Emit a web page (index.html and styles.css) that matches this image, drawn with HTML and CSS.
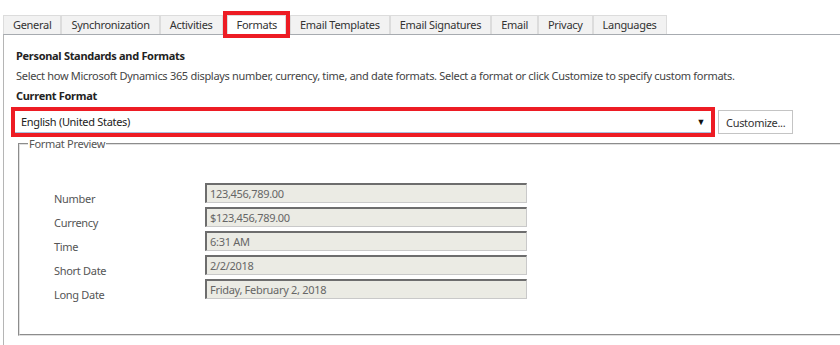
FILE: index.html
```html
<!DOCTYPE html>
<html>
  <head>
    <title>Set Personal Options</title>
    <link rel="stylesheet" href="styles.css">
  </head>

  <body>
    <div class="page">
      <ul class="tabs">
        <li class="tab">General</li>
        <li class="tab">Synchronization</li>
        <li class="tab">Activities</li>
        <li class="tab active">Formats</li>
        <li class="tab">Email Templates</li>
        <li class="tab">Email Signatures</li>
        <li class="tab">Email</li>
        <li class="tab">Privacy</li>
        <li class="tab">Languages</li>
      </ul>

      <div class="panel">
        <h2 class="section-title">Personal Standards and Formats</h2>
        <p class="hint">Select how Microsoft Dynamics 365 displays number, currency, time, and date formats. Select a format or click Customize to specify custom formats.</p>
        <h3 class="field-title">Current Format</h3>

        <div class="format-row">
          <div class="select">
            <span>English (United States)</span>
            <span class="arrow">&#9660;</span>
          </div>
          <button class="btn">Customize...</button>
        </div>

        <fieldset class="preview">
          <legend>Format Preview</legend>
          <div class="preview-grid">
            <span class="label">Number</span>
            <span class="value">123,456,789.00</span>
            <span class="label">Currency</span>
            <span class="value">$123,456,789.00</span>
            <span class="label">Time</span>
            <span class="value">6:31 AM</span>
            <span class="label">Short Date</span>
            <span class="value">2/2/2018</span>
            <span class="label">Long Date</span>
            <span class="value">Friday, February 2, 2018</span>
          </div>
        </fieldset>
      </div>
    </div>
  </body>
</html>
```

FILE: styles.css
```css
html, body {
  margin: 0;
  overflow: hidden;
  background: white;
}
body {
  font-family: "Noto Sans", "Open Sans", sans-serif;
  font-size: 11px;
  letter-spacing: -0.3px;
  color: #222;
}
.page {
  padding: 15px 0 0 3px;
  height: 330px;
  overflow: hidden;
}

/* tab strip */
.tabs {
  display: flex;
  margin: 0;
  padding: 0;
  list-style: none;
}
.tab {
  height: 18px;
  line-height: 18px;
  padding: 0 9px;
  background: #f2f2f2;
  border: 1px solid #dcdcdc;
  border-bottom: 0;
  color: #333;
  white-space: nowrap;
}
.tab.active {
  background: white;
  margin: 0 4px;
  padding: 0 8px 0 9px;
  outline: 4px solid #ed1c24;
}

/* main panel */
.panel {
  border-top: 1px solid #a7abb0;
  border-left: 1px solid #b5b5b5;
  padding: 11px 0 0 12px;
  height: 320px;
}
.section-title {
  margin: 0;
  font-size: 11px;
  font-weight: bold;
  line-height: 20px;
}
.hint {
  margin: 0;
  line-height: 20px;
  color: #444;
  white-space: nowrap;
}
.field-title {
  margin: 0;
  font-size: 11px;
  font-weight: bold;
  line-height: 20px;
}

.format-row {
  display: flex;
  align-items: center;
  gap: 7px;
  margin-top: 4px;
}
.select {
  display: flex;
  justify-content: space-between;
  align-items: center;
  width: 684px;
  height: 21px;
  padding: 0 6px 0 6px;
  background: white;
  border-bottom: 1px solid #a9c0e0;
  outline: 4px solid #ed1c24;
  margin-left: -1px;
}
.select .arrow {
  font-size: 9px;
  color: #111;
}
.btn {
  height: 24px;
  padding: 0 7px;
  background: white;
  border: 1px solid #c4c4c4;
  font-family: inherit;
  font-size: 11px;
  letter-spacing: inherit;
  color: #333;
}

/* preview group */
.preview {
  margin: 2px 0 0 2px;
  padding: 0;
  width: 880px;
  height: 200px;
  box-sizing: border-box;
  border: 2px groove #e0e0e0;
}
.preview legend {
  margin-left: 8px;
  padding: 0 1px;
  color: #555;
}
.preview-grid {
  display: grid;
  grid-template-columns: 151px 322px;
  row-gap: 4px;
  padding: 32px 0 0 34px;
  align-items: center;
}
.label {
  color: #555;
  line-height: 20px;
  padding-top: 6px;
  margin-bottom: -6px;
}
.value {
  height: 17px;
  line-height: 17px;
  padding-left: 3px;
  background: #ebebe4;
  border-top: 2px solid #6d6d6d;
  border-left: 2px solid #6d6d6d;
  border-right: 1px solid #c9c9c9;
  border-bottom: 1px solid #c9c9c9;
  color: #666;
}
```
